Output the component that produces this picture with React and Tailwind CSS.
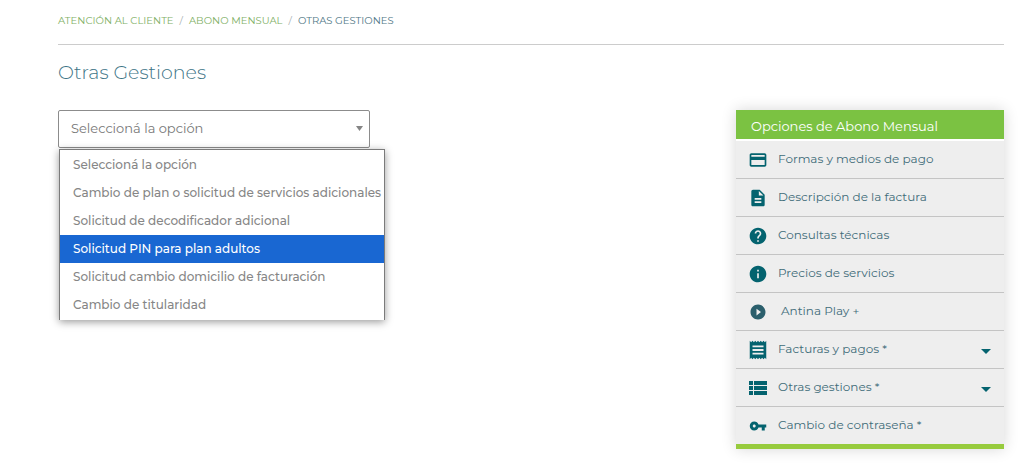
import { useState } from "react";
import {
  MdArrowDropDown,
  MdCreditCard,
  MdDescription,
  MdHelp,
  MdInfo,
  MdPlayCircleFilled,
  MdReceipt,
  MdViewList,
  MdVpnKey,
} from "react-icons/md";

const OPTIONS = [
  "Seleccioná la opción",
  "Cambio de plan o solicitud de servicios adicionales",
  "Solicitud de decodificador adicional",
  "Solicitud PIN para plan adultos",
  "Solicitud cambio domicilio de facturación",
  "Cambio de titularidad",
];

const MENU = [
  { label: "Formas y medios de pago", icon: MdCreditCard, iconClass: "size-5 text-[#04636f]" },
  { label: "Descripción de la factura", icon: MdDescription, iconClass: "size-5 text-[#04636f]" },
  { label: "Consultas técnicas", icon: MdHelp, iconClass: "size-5 text-[#04636f]" },
  { label: "Precios de servicios", icon: MdInfo, iconClass: "size-5 text-[#04636f]" },
  { label: "Antina Play +", icon: MdPlayCircleFilled, iconClass: "size-[18px] text-[#2b5f6c]", indent: true },
  { label: "Facturas y pagos *", icon: MdReceipt, iconClass: "size-[22px] text-[#04636f]", expandable: true },
  { label: "Otras gestiones *", icon: MdViewList, iconClass: "size-6 text-[#04636f]", expandable: true },
  { label: "Cambio de contraseña *", icon: MdVpnKey, iconClass: "size-[18px] text-[#04636f]" },
];

function Breadcrumb() {
  return (
    <nav aria-label="Ruta" className="border-b border-[#cccccc] pt-3 pb-[14px]">
      <ol className="flex gap-1.5 text-[10px] leading-[18px] uppercase">
        <li>
          <a href="#atencion" className="text-[#7fb066]">Atención al cliente</a>
        </li>
        <li aria-hidden="true" className="text-[#a5adb0]">/</li>
        <li>
          <a href="#abono" className="text-[#7fb066]">Abono mensual</a>
        </li>
        <li aria-hidden="true" className="text-[#a5adb0]">/</li>
        <li aria-current="page" className="text-[#4f7685]">Otras gestiones</li>
      </ol>
    </nav>
  );
}

function OptionPicker() {
  const [value, setValue] = useState(OPTIONS[0]);
  const [active, setActive] = useState(3);

  return (
    <div className="relative w-[312px]">
      <select
        aria-label="Gestión"
        value={value}
        onChange={(e) => setValue(e.target.value)}
        className="block h-[38px] w-full appearance-none rounded-xs border border-[#8c8c8c] bg-white px-3 text-[13px] text-[#777777] outline-none"
      >
        {OPTIONS.map((option) => (
          <option key={option}>{option}</option>
        ))}
      </select>
      <svg viewBox="0 0 7 5" className="pointer-events-none absolute top-4 right-[7px] h-[5px] w-[7px] fill-[#858585]">
        <path d="M0 0h7L3.5 5z" />
      </svg>

      <ul
        role="listbox"
        aria-label="Opciones"
        className="absolute top-[39px] left-px w-[326px] border border-b-0 border-[#7b7b7b] bg-white py-px text-[12px] leading-7 font-medium whitespace-nowrap text-[#868686] shadow-[0_2px_8px_rgba(0,0,0,0.4)]"
      >
        {OPTIONS.map((option, i) => (
          <li
            key={option}
            role="option"
            aria-selected={i === active}
            onMouseEnter={() => setActive(i)}
            onClick={() => setValue(option)}
            className={i === active ? "bg-[#1967d2] pl-[13px] text-white" : "pl-[13px]"}
          >
            {option}
          </li>
        ))}
      </ul>
    </div>
  );
}

function MenuItem({ item }) {
  const Icon = item.icon;

  return (
    <li className="border-b border-[#c4c4c4] last:border-b-0">
      <a href="#menu" className="flex h-[37px] items-center pr-[6px] pl-3 text-[12px] text-[#3f6c79]">
        <span className="flex w-5 justify-center">
          <Icon className={`shrink-0 ${item.iconClass}`} />
        </span>
        <span className={item.indent ? "ml-[13px] pb-0.5" : "ml-[10px] pb-0.5"}>{item.label}</span>
        {item.expandable ? <MdArrowDropDown className="mt-[2px] ml-auto size-6 text-[#04636f]" /> : null}
      </a>
    </li>
  );
}

function Sidebar() {
  return (
    <aside className="w-[268px] shrink-0 border-b-[5px] border-[#97cb3d] bg-[#eeeeee] shadow-[0_0_14px_rgba(0,0,0,0.16)]">
      <h2 className="border-b-2 border-white bg-[#7bc242] pt-[3px] pl-[15px] text-[13px] leading-[26px] text-white">
        Opciones de Abono Mensual
      </h2>
      <ul>
        {MENU.map((item) => (
          <MenuItem key={item.label} item={item} />
        ))}
      </ul>
    </aside>
  );
}

export default function App() {
  return (
    <div className="bg-white pr-5 pl-[58px] font-['Montserrat','Inter',sans-serif]">
      <Breadcrumb />
      <h1 className="pt-[14px] text-[19px] leading-[28px] font-light text-[#3d7486]">Otras Gestiones</h1>
      <main className="mt-[23px] flex items-start justify-between pb-4">
        <OptionPicker />
        <Sidebar />
      </main>
    </div>
  );
}
